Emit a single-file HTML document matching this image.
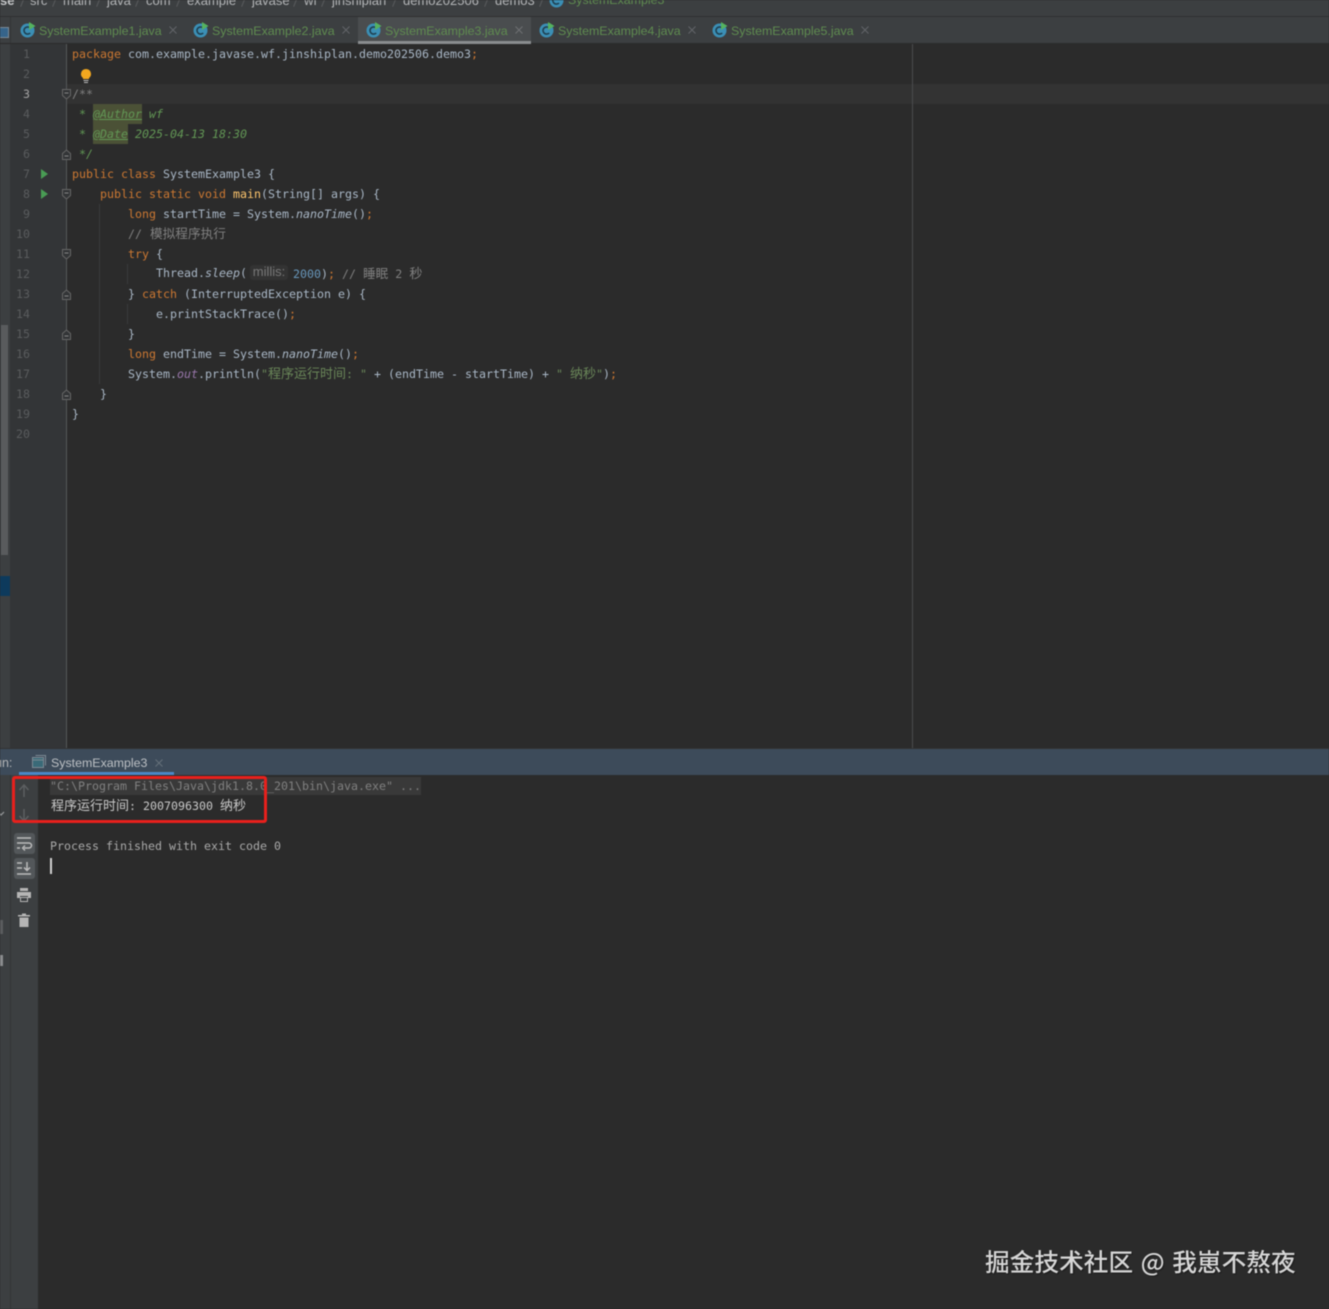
<!DOCTYPE html>
<html><head><meta charset="utf-8"><style>
html,body{margin:0;padding:0;background:#2b2b2b}
#p{position:relative;width:1329px;height:1309px;overflow:hidden;background:#2b2b2b;font-family:"DejaVu Sans Mono","Noto Sans CJK SC",monospace;font-size:11.63px;color:#a9b7c6;filter:blur(.4px)}
.a{position:absolute}
.l{position:absolute;left:72px;height:20px;line-height:20px;white-space:pre}
.n{position:absolute;left:10px;width:20px;text-align:right;height:20px;line-height:20px;color:#5a5c5e;font-size:11.6px}
.k{color:#cc7832}.c{color:#808080}.j{color:#629755;font-style:italic}.i{font-style:italic}
.h{font-family:"Noto Sans CJK SC",sans-serif;font-size:12.67px}
.w{font-family:"Noto Sans CJK SC",sans-serif;font-size:13px}
.s{color:#6a8759}.t{display:inline-block;height:20px;background:#4b5136;text-decoration:underline}
.b{position:absolute;top:-8px;height:17px;font:13px/17px "Liberation Sans",sans-serif;color:#b4b6b8;white-space:pre}
.sep{position:absolute;top:-3px;width:1px;height:10px;background:#5a5c5e;transform:rotate(22deg)}
.tb{position:absolute;top:18px;height:26px;font:12.4px/27px "Liberation Sans",sans-serif;color:#5f8c50;white-space:pre}
.x{position:absolute;top:26px}
.v{position:absolute;width:1px;background:#393b3c}
</style></head><body><div id="p">
<!-- breadcrumb -->
<div class="a" style="left:0;top:0;width:1329px;height:16px;background:#3c3f41"></div>
<div class="a" style="left:0;top:16px;width:1329px;height:1px;background:#2f3031"></div>
<span class="b" style="left:0;font-weight:bold;color:#c4c6c8">se</span>
<span class="b" style="left:30px">src</span><span class="b" style="left:63px">main</span><span class="b" style="left:107px">java</span><span class="b" style="left:146px">com</span><span class="b" style="left:187px">example</span><span class="b" style="left:252px">javase</span><span class="b" style="left:304px">wf</span><span class="b" style="left:332px">jinshiplan</span><span class="b" style="left:403px">demo202506</span><span class="b" style="left:495px">demo3</span><span class="b" style="left:568px;color:#5f8c50;font-size:12.4px">SystemExample3</span>
<i class="sep" style="left:22px"></i><i class="sep" style="left:54px"></i><i class="sep" style="left:98px"></i><i class="sep" style="left:137px"></i><i class="sep" style="left:178px"></i><i class="sep" style="left:243px"></i><i class="sep" style="left:295px"></i><i class="sep" style="left:323px"></i><i class="sep" style="left:394px"></i><i class="sep" style="left:486px"></i><i class="sep" style="left:541px"></i>
<svg class="a" style="left:549px;top:-7px" width="16" height="16"><circle cx="7.5" cy="7.5" r="7" fill="#3b8fb5"/><path d="M10 5a3.6 3.6 0 1 0 0 5" fill="none" stroke="#1f3f50" stroke-width="1.6"/></svg>
<!-- tabs -->
<div class="a" style="left:0;top:17px;width:1329px;height:26px;background:#3c3f41"></div>
<div class="a" style="left:358px;top:17px;width:173px;height:26px;background:#4a4d4f"></div>
<div class="a" style="left:358px;top:41px;width:173px;height:3px;background:#8a8d8f"></div>
<div class="a" style="left:0;top:27px;width:8px;height:9px;background:#36648a;border:1px solid #7a8a96;border-left:0"></div>
<div class="a" style="left:10px;top:17px;width:1px;height:26px;background:#333536"></div>
<svg class="a" style="left:20px;top:22px" width="17" height="16"><circle cx="7.5" cy="8.5" r="7" fill="#3b8fb5"/><path d="M10.2 6a3.6 3.6 0 1 0 0 5" fill="none" stroke="#1f3f50" stroke-width="1.6"/><path d="M9 0l6.500 4-6.500 4z" fill="#55b25f"/></svg>
<span class="tb" style="left:39px">SystemExample1.java</span>
<svg class="x" style="left:169px" width="8" height="8"><path d="M.5.5l7 7M7.5.5l-7 7" stroke="#62646a"/></svg>
<svg class="a" style="left:193px;top:22px" width="17" height="16"><circle cx="7.5" cy="8.5" r="7" fill="#3b8fb5"/><path d="M10.2 6a3.6 3.6 0 1 0 0 5" fill="none" stroke="#1f3f50" stroke-width="1.6"/><path d="M9 0l6.500 4-6.500 4z" fill="#55b25f"/></svg>
<span class="tb" style="left:212px">SystemExample2.java</span>
<svg class="x" style="left:342px" width="8" height="8"><path d="M.5.5l7 7M7.5.5l-7 7" stroke="#62646a"/></svg>
<svg class="a" style="left:366px;top:22px" width="17" height="16"><circle cx="7.5" cy="8.5" r="7" fill="#3b8fb5"/><path d="M10.2 6a3.6 3.6 0 1 0 0 5" fill="none" stroke="#1f3f50" stroke-width="1.6"/><path d="M9 0l6.500 4-6.500 4z" fill="#55b25f"/></svg>
<span class="tb" style="left:385px">SystemExample3.java</span>
<svg class="x" style="left:515px" width="8" height="8"><path d="M.5.5l7 7M7.5.5l-7 7" stroke="#6e7073"/></svg>
<svg class="a" style="left:539px;top:22px" width="17" height="16"><circle cx="7.5" cy="8.5" r="7" fill="#3b8fb5"/><path d="M10.2 6a3.6 3.6 0 1 0 0 5" fill="none" stroke="#1f3f50" stroke-width="1.6"/><path d="M9 0l6.500 4-6.500 4z" fill="#55b25f"/></svg>
<span class="tb" style="left:558px">SystemExample4.java</span>
<svg class="x" style="left:688px" width="8" height="8"><path d="M.5.5l7 7M7.5.5l-7 7" stroke="#62646a"/></svg>
<svg class="a" style="left:712px;top:22px" width="17" height="16"><circle cx="7.5" cy="8.5" r="7" fill="#3b8fb5"/><path d="M10.2 6a3.6 3.6 0 1 0 0 5" fill="none" stroke="#1f3f50" stroke-width="1.6"/><path d="M9 0l6.500 4-6.500 4z" fill="#55b25f"/></svg>
<span class="tb" style="left:731px">SystemExample5.java</span>
<svg class="x" style="left:861px" width="8" height="8"><path d="M.5.5l7 7M7.5.5l-7 7" stroke="#62646a"/></svg>
<!-- left strip + gutter -->
<div class="a" style="left:0;top:44px;width:10px;height:705px;background:#3c3f41"></div>
<div class="a" style="left:1px;top:325px;width:7px;height:230px;background:#595b5d"></div>
<div class="a" style="left:0;top:576px;width:10px;height:20px;background:#0d3a5c"></div>
<div class="a" style="left:10px;top:44px;width:56px;height:705px;background:#333537"></div>
<div class="a" style="left:66px;top:44px;width:1px;height:705px;background:#55585a"></div>
<div class="a" style="left:67px;top:84px;width:1262px;height:20px;background:#323232"></div>
<div class="a" style="left:912px;top:44px;width:1px;height:705px;background:#4a4c4e"></div>
<div class="a" style="left:913px;top:84px;width:416px;height:20px;background:#333333"></div>
<div class="v" style="left:99px;top:204px;height:180px"></div>
<div class="v" style="left:127px;top:264px;height:20px"></div>
<div class="v" style="left:127px;top:304px;height:20px"></div>
<!-- line numbers -->
<div class="n" style="top:44px">1</div><div class="n" style="top:64px">2</div><div class="n" style="top:84px;color:#a4a3a3">3</div><div class="n" style="top:104px">4</div><div class="n" style="top:124px">5</div><div class="n" style="top:144px">6</div><div class="n" style="top:164px">7</div><div class="n" style="top:184px">8</div><div class="n" style="top:204px">9</div><div class="n" style="top:224px">10</div><div class="n" style="top:244px">11</div><div class="n" style="top:264px">12</div><div class="n" style="top:284px">13</div><div class="n" style="top:304px">14</div><div class="n" style="top:324px">15</div><div class="n" style="top:344px">16</div><div class="n" style="top:364px">17</div><div class="n" style="top:384px">18</div><div class="n" style="top:404px">19</div><div class="n" style="top:424px">20</div>
<!-- run arrows -->
<svg class="a" style="left:40px;top:169px" width="9" height="10"><path d="M1 0l7 5-7 5z" fill="#499c54"/></svg>
<svg class="a" style="left:40px;top:189px" width="9" height="10"><path d="M1 0l7 5-7 5z" fill="#499c54"/></svg>
<!-- fold marks -->
<svg class="a" style="left:62px;top:89px" width="10" height="11"><path d="M.5.5h8v6l-4 3.500-4-3.500z" fill="#333537" stroke="#666"/><path d="M2.500 4h4" stroke="#888"/></svg>
<svg class="a" style="left:62px;top:149px" width="10" height="11"><path d="M.5 10.500h8v-6L4.500 1 .5 4.500z" fill="#333537" stroke="#666"/><path d="M2.500 7h4" stroke="#888"/></svg>
<svg class="a" style="left:62px;top:189px" width="10" height="11"><path d="M.5.5h8v6l-4 3.500-4-3.500z" fill="#333537" stroke="#666"/><path d="M2.500 4h4" stroke="#888"/></svg>
<svg class="a" style="left:62px;top:249px" width="10" height="11"><path d="M.5.5h8v6l-4 3.500-4-3.500z" fill="#333537" stroke="#666"/><path d="M2.500 4h4" stroke="#888"/></svg>
<svg class="a" style="left:62px;top:289px" width="10" height="11"><path d="M.5 10.500h8v-6L4.500 1 .5 4.500z" fill="#333537" stroke="#666"/><path d="M2.500 7h4" stroke="#888"/></svg>
<svg class="a" style="left:62px;top:329px" width="10" height="11"><path d="M.5 10.500h8v-6L4.500 1 .5 4.500z" fill="#333537" stroke="#666"/><path d="M2.500 7h4" stroke="#888"/></svg>
<svg class="a" style="left:62px;top:389px" width="10" height="11"><path d="M.5 10.500h8v-6L4.500 1 .5 4.500z" fill="#333537" stroke="#666"/><path d="M2.500 7h4" stroke="#888"/></svg>
<!-- bulb -->
<svg class="a" style="left:80px;top:69px" width="12" height="14"><path d="M6 0a5 5 0 0 1 3 9v1H3V9a5 5 0 0 1 3-9z" fill="#f2a71f"/><path d="M3.500 11.500h5M4 13.500h4" stroke="#bbb"/></svg>
<!-- code -->
<div class="l" style="top:44px"><span class="k">package</span> com.example.javase.wf.jinshiplan.demo202506.demo3<span class="k">;</span></div>
<div class="l" style="top:84px;color:#808080">/**</div>
<div class="l j" style="top:104px"> * <span class="t">@Author</span> wf</div>
<div class="l j" style="top:124px"> * <span class="t">@Date</span> 2025-04-13 18:30</div>
<div class="l j" style="top:144px"> */</div>
<div class="l" style="top:164px"><span class="k">public class</span> SystemExample3 {</div>
<div class="l" style="top:184px;left:100px"><span class="k">public static void</span> <span style="color:#ffc66d">main</span>(String[] args) {</div>
<div class="l" style="top:204px;left:128px"><span class="k">long</span> startTime = System.<span class="i">nanoTime</span>()<span class="k">;</span></div>
<div class="l c" style="top:223px;left:128px">// <span class="h" style="margin-left:1px">模拟程序执行</span></div>
<div class="l" style="top:244px;left:128px"><span class="k">try</span> {</div>
<div class="l" style="top:263px;left:156px">Thread.<span class="i">sleep</span>(</div>
<div class="a" style="left:250px;top:265px;width:38px;height:15px;background:#333333;border-radius:3px;color:#787878;font:13px/14px 'Liberation Sans',sans-serif;text-align:center">millis:</div>
<div class="l" style="top:263px;left:293px"><span style="color:#6897bb">2000</span>)<span class="k">;</span> <span class="c">// <span class="h">睡眠</span> 2 <span class="w">秒</span></span></div>
<div class="l" style="top:284px;left:128px">} <span class="k">catch</span> (InterruptedException e) {</div>
<div class="l" style="top:304px;left:156px">e.printStackTrace()<span class="k">;</span></div>
<div class="l" style="top:324px;left:128px">}</div>
<div class="l" style="top:344px;left:128px"><span class="k">long</span> endTime = System.<span class="i">nanoTime</span>()<span class="k">;</span></div>
<div class="l" style="top:363px;left:128px">System.<span class="i" style="color:#9876aa">out</span>.println(<span class="s">"<span class="w">程序运行时间</span>: "</span> + (endTime - startTime) + <span class="s">" <span class="w">纳秒</span>"</span>)<span class="k">;</span></div>
<div class="l" style="top:384px;left:100px">}</div>
<div class="l" style="top:404px">}</div>
<!-- run header -->
<div class="a" style="left:0;top:749px;width:1329px;height:26px;background:#3d4b5a"></div>
<div class="a" style="left:0;top:748px;width:1329px;height:1px;background:#323232"></div>
<div class="a" style="left:19px;top:772px;width:155px;height:3px;background:#4a88c7"></div>
<div class="a" style="left:-5px;top:755px;font:12.5px/16px 'Liberation Sans',sans-serif;color:#b4b6b8">un:</div>
<svg class="a" style="left:32px;top:755px" width="14" height="14"><path d="M3.500.5h10v10" fill="none" stroke="#7d8a94"/><rect x=".5" y="2.500" width="11" height="10" fill="#3a6a78" stroke="#7d8a94"/><path d="M1 5h10" stroke="#7d8a94"/></svg>
<div class="a" style="left:51px;top:755px;font:12.4px/16px 'Liberation Sans',sans-serif;color:#bcc0c4">SystemExample3</div>
<svg class="a" style="left:155px;top:759px" width="8" height="8"><path d="M.5.5l7 7M7.5.5l-7 7" stroke="#65707a"/></svg>
<!-- run left -->
<div class="a" style="left:0;top:775px;width:10px;height:534px;background:#3c3f41"></div>
<div class="a" style="left:10px;top:775px;width:28px;height:534px;background:#3c3f41;border-left:1px solid #333536;box-sizing:border-box"></div>
<svg class="a" style="left:0;top:810px" width="5" height="8"><path d="M-2 2l3 3 3-3" fill="none" stroke="#9a9c9e" stroke-width="1.200"/></svg>
<div class="a" style="left:0;top:920px;width:3px;height:14px;background:#5a5c5e"></div>
<div class="a" style="left:0;top:955px;width:3px;height:11px;background:#8a8c8e"></div>
<svg class="a" style="left:18px;top:784px" width="12" height="14"><path d="M6 13V1M1.500 6L6 1l4.500 5" fill="none" stroke="#5c5f61" stroke-width="1.500"/></svg>
<svg class="a" style="left:18px;top:808px" width="12" height="14"><path d="M6 1v12M1.500 8L6 13l4.500-5" fill="none" stroke="#5c5f61" stroke-width="1.500"/></svg>
<div class="a" style="left:14px;top:833px;width:21px;height:21px;background:#53575a;border-radius:3px"></div>
<div class="a" style="left:14px;top:858px;width:21px;height:21px;background:#53575a;border-radius:3px"></div>
<svg class="a" style="left:16px;top:835px" width="17" height="17"><path d="M1 3h14M1 8h12a2.500 2.500 0 0 1 0 5H8M1 13h3" fill="none" stroke="#bcbcbc" stroke-width="1.500"/><path d="M9 10.500l-2.500 2.500L9 15.500" fill="none" stroke="#bcbcbc" stroke-width="1.300"/></svg>
<svg class="a" style="left:16px;top:860px" width="17" height="17"><path d="M1 3h5M1 8h5M1 14h14M11 2v8M8 7.500l3 3 3-3" fill="none" stroke="#bcbcbc" stroke-width="1.500"/></svg>
<svg class="a" style="left:17px;top:888px" width="14" height="15"><path d="M3 0h8v3H3z" fill="#b5b5b5"/><path d="M0 4h14v6h-3V8H3v2H0z" fill="#b5b5b5"/><path d="M3.500 9.500h7v4h-7z" fill="none" stroke="#b5b5b5"/></svg>
<svg class="a" style="left:18px;top:913px" width="12" height="15"><path d="M4 .5h4v1.500h4v1.500H0V2h4z" fill="#b5b5b5"/><path d="M1.500 4.500h9v9.500h-9z" fill="#b5b5b5"/></svg>
<!-- console -->
<div class="a" style="left:50px;top:777px;width:371px;height:18px;background:#393939"></div>
<div class="l c" style="left:50px;top:776px">"C:\Program Files\Java\jdk1.8.0_201\bin\java.exe" ...</div>
<div class="l" style="left:51px;top:795px;color:#c8c8c8"><span class="w">程序运行时间</span>: 2007096300 <span class="w">纳秒</span></div>
<div class="l" style="left:50px;top:836px;color:#a9a9a9">Process finished with exit code 0</div>
<div class="a" style="left:50px;top:858px;width:2px;height:16px;background:#d0d0d0"></div>
<!-- red box -->
<div class="a" style="left:12px;top:776px;width:255px;height:47px;box-sizing:border-box;border:3px solid #e8201c;border-radius:3px"></div>
<!-- watermark -->
<div class="a" style="left:985px;top:1243px;font:500 24.7px/36px 'Noto Sans CJK SC',sans-serif;word-spacing:2px;color:#d6d6d6;white-space:pre;text-shadow:1px 1px 1px #1a1a1a">掘金技术社区 @ 我崽不熬夜</div>
</div></body></html>
